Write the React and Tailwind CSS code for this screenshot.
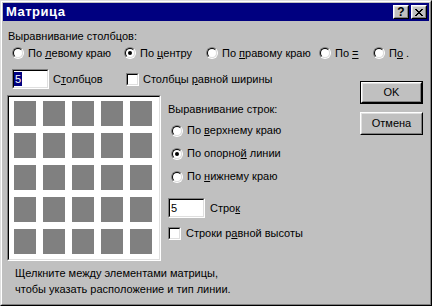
import React from 'react';

const sunkenOuter = 'border border-t-[#808080] border-l-[#808080] border-b-white border-r-white';
const sunkenInner = 'border border-t-black border-l-black border-b-[#dfdfdf] border-r-[#dfdfdf]';
const raisedOuter = 'border border-t-white border-l-white border-b-black border-r-black';
const raisedInner = 'border border-t-[#dfdfdf] border-l-[#dfdfdf] border-b-[#808080] border-r-[#808080]';

function Radio({ checked }) {
  return (
    <span className={`w-[12px] h-[12px] rounded-full flex shrink-0 ${sunkenOuter}`}>
      <span className={`flex-1 rounded-full bg-white flex items-center justify-center ${sunkenInner}`}>
        {checked && <span className="w-[4px] h-[4px] rounded-full bg-black" />}
      </span>
    </span>
  );
}

function Check() {
  return (
    <span className={`w-[13px] h-[13px] flex shrink-0 ${sunkenOuter}`}>
      <span className={`flex-1 bg-white ${sunkenInner}`} />
    </span>
  );
}

function Field({ value, selected }) {
  return (
    <span className={`w-[37px] h-[20px] flex shrink-0 ${sunkenOuter}`}>
      <span className={`flex-1 bg-white flex items-stretch py-[1px] ${sunkenInner}`}>
        <span className={selected ? 'px-[1px] bg-[#000080] text-white leading-[15px]' : 'px-[1px] leading-[15px]'}>
          {value}
        </span>
      </span>
    </span>
  );
}

function Option({ checked, className, children }) {
  return (
    <label className={`flex items-center gap-[4px] ${className || ''}`}>
      <Radio checked={checked} />
      <span className="whitespace-nowrap">{children}</span>
    </label>
  );
}

function Button({ isDefault, children }) {
  return (
    <div className={isDefault ? 'w-[63px] h-[23px] flex border border-black' : 'w-[63px] h-[23px] flex'}>
      <span className={`flex-1 flex ${raisedOuter}`}>
        <span className={`flex-1 flex items-center justify-center ${raisedInner}`}>{children}</span>
      </span>
    </div>
  );
}

function TitleButton({ children }) {
  return (
    <span className={`w-[16px] h-[14px] flex bg-[#c0c0c0] ${raisedOuter}`}>
      <span className={`flex-1 flex items-center justify-center ${raisedInner}`}>{children}</span>
    </span>
  );
}

export default function App() {
  const cells = Array.from({ length: 25 });

  return (
    <div className="w-[432px] h-[306px] bg-[#c0c0c0] border border-t-[#dfdfdf] border-l-[#dfdfdf] border-b-black border-r-black font-['Liberation_Sans',Arial,sans-serif] text-[11px] leading-[13px] text-black">
      <div className="h-full flex flex-col p-px border border-t-white border-l-white border-b-[#808080] border-r-[#808080]">
        {/* title bar */}
        <div className="h-[18px] shrink-0 bg-[#000080] flex items-center pl-[3px] pr-[2px]">
          <span className="text-white font-bold text-[13px] leading-[14px] tracking-[0.5px]">Матрица</span>
          <div className="ml-auto flex gap-[2px]">
            <TitleButton>
              <span className="font-bold text-[12px] leading-[10px]">?</span>
            </TitleButton>
            <TitleButton>
              <svg width="8" height="7" viewBox="0 0 8 7">
                <path d="M0 0h2v1h1v1h2v-1h1v-1h2v1h-1v1h-1v1h-1v1h1v1h1v1h1v1h-2v-1h-1v-1h-2v1h-1v1h-2v-1h1v-1h1v-1h1v-1h-1v-1h-1v-1h-1z" fill="black" />
              </svg>
            </TitleButton>
          </div>
        </div>

        {/* body */}
        <div className="flex flex-col px-[4px]">
          <div className="mt-[9px] ml-[1px]">Выравнивание столбцов:</div>

          <div className="mt-[4px] ml-[5px] h-[12px] flex items-center">
            <Option className="w-[112px]">По <u>л</u>евому краю</Option>
            <Option className="w-[82px]" checked>По <u>ц</u>ентру</Option>
            <Option className="w-[113px]">По <u>п</u>равому краю</Option>
            <Option className="w-[54px]">По <u>=</u></Option>
            <Option>П<u>о</u> .</Option>
          </div>

          <div className="mt-[10px] flex">
            <div className="w-[353px] flex flex-col">
              <div className="ml-[5px] h-[20px] flex items-center">
                <div className="w-[114px] flex items-center gap-[4px]">
                  <Field value="5" selected />
                  <span>С<u>т</u>олбцов</span>
                </div>
                <label className="flex items-center gap-[4px]">
                  <Check />
                  <span>Столбцы <u>р</u>авной ширины</span>
                </label>
              </div>

              <div className="mt-[6px] flex">
                {/* matrix preview */}
                <div className={`w-[154px] h-[166px] shrink-0 flex ${sunkenOuter}`}>
                  <div className={`flex-1 bg-white pl-[5px] pt-[4px] ${sunkenInner}`}>
                    <div className="grid grid-cols-[repeat(5,22px)] gap-[7px]">
                      {cells.map((_, i) => (
                        <div key={i} className="h-[25px] bg-[#808080]" />
                      ))}
                    </div>
                  </div>
                </div>

                <div className="ml-[7px] flex flex-col">
                  <div className="mt-[8px]">Выравнивание строк:</div>
                  <div className="mt-[3px] flex flex-col">
                    <Option className="h-[23px] ml-[3px]">По <u>в</u>ерхнему краю</Option>
                    <Option className="h-[23px] ml-[3px]" checked>По опорно<u>й</u> линии</Option>
                    <Option className="h-[23px] ml-[3px]">По <u>н</u>ижнему краю</Option>
                  </div>
                  <div className="mt-[10px] flex items-center gap-[5px]">
                    <Field value="5" />
                    <span>Стро<u>к</u></span>
                  </div>
                  <label className="mt-[9px] flex items-center gap-[5px]">
                    <Check />
                    <span>Строки р<u>а</u>вной высоты</span>
                  </label>
                </div>
              </div>
            </div>

            <div className="mt-[12px] flex flex-col gap-[8px]">
              <Button isDefault>OK</Button>
              <Button>Отмена</Button>
            </div>
          </div>

          <div className="mt-[4px] ml-[8px] leading-[16px]">
            <div>Щелкните между элементами матрицы,</div>
            <div>чтобы указать расположение и тип линии.</div>
          </div>
        </div>
      </div>
    </div>
  );
}
